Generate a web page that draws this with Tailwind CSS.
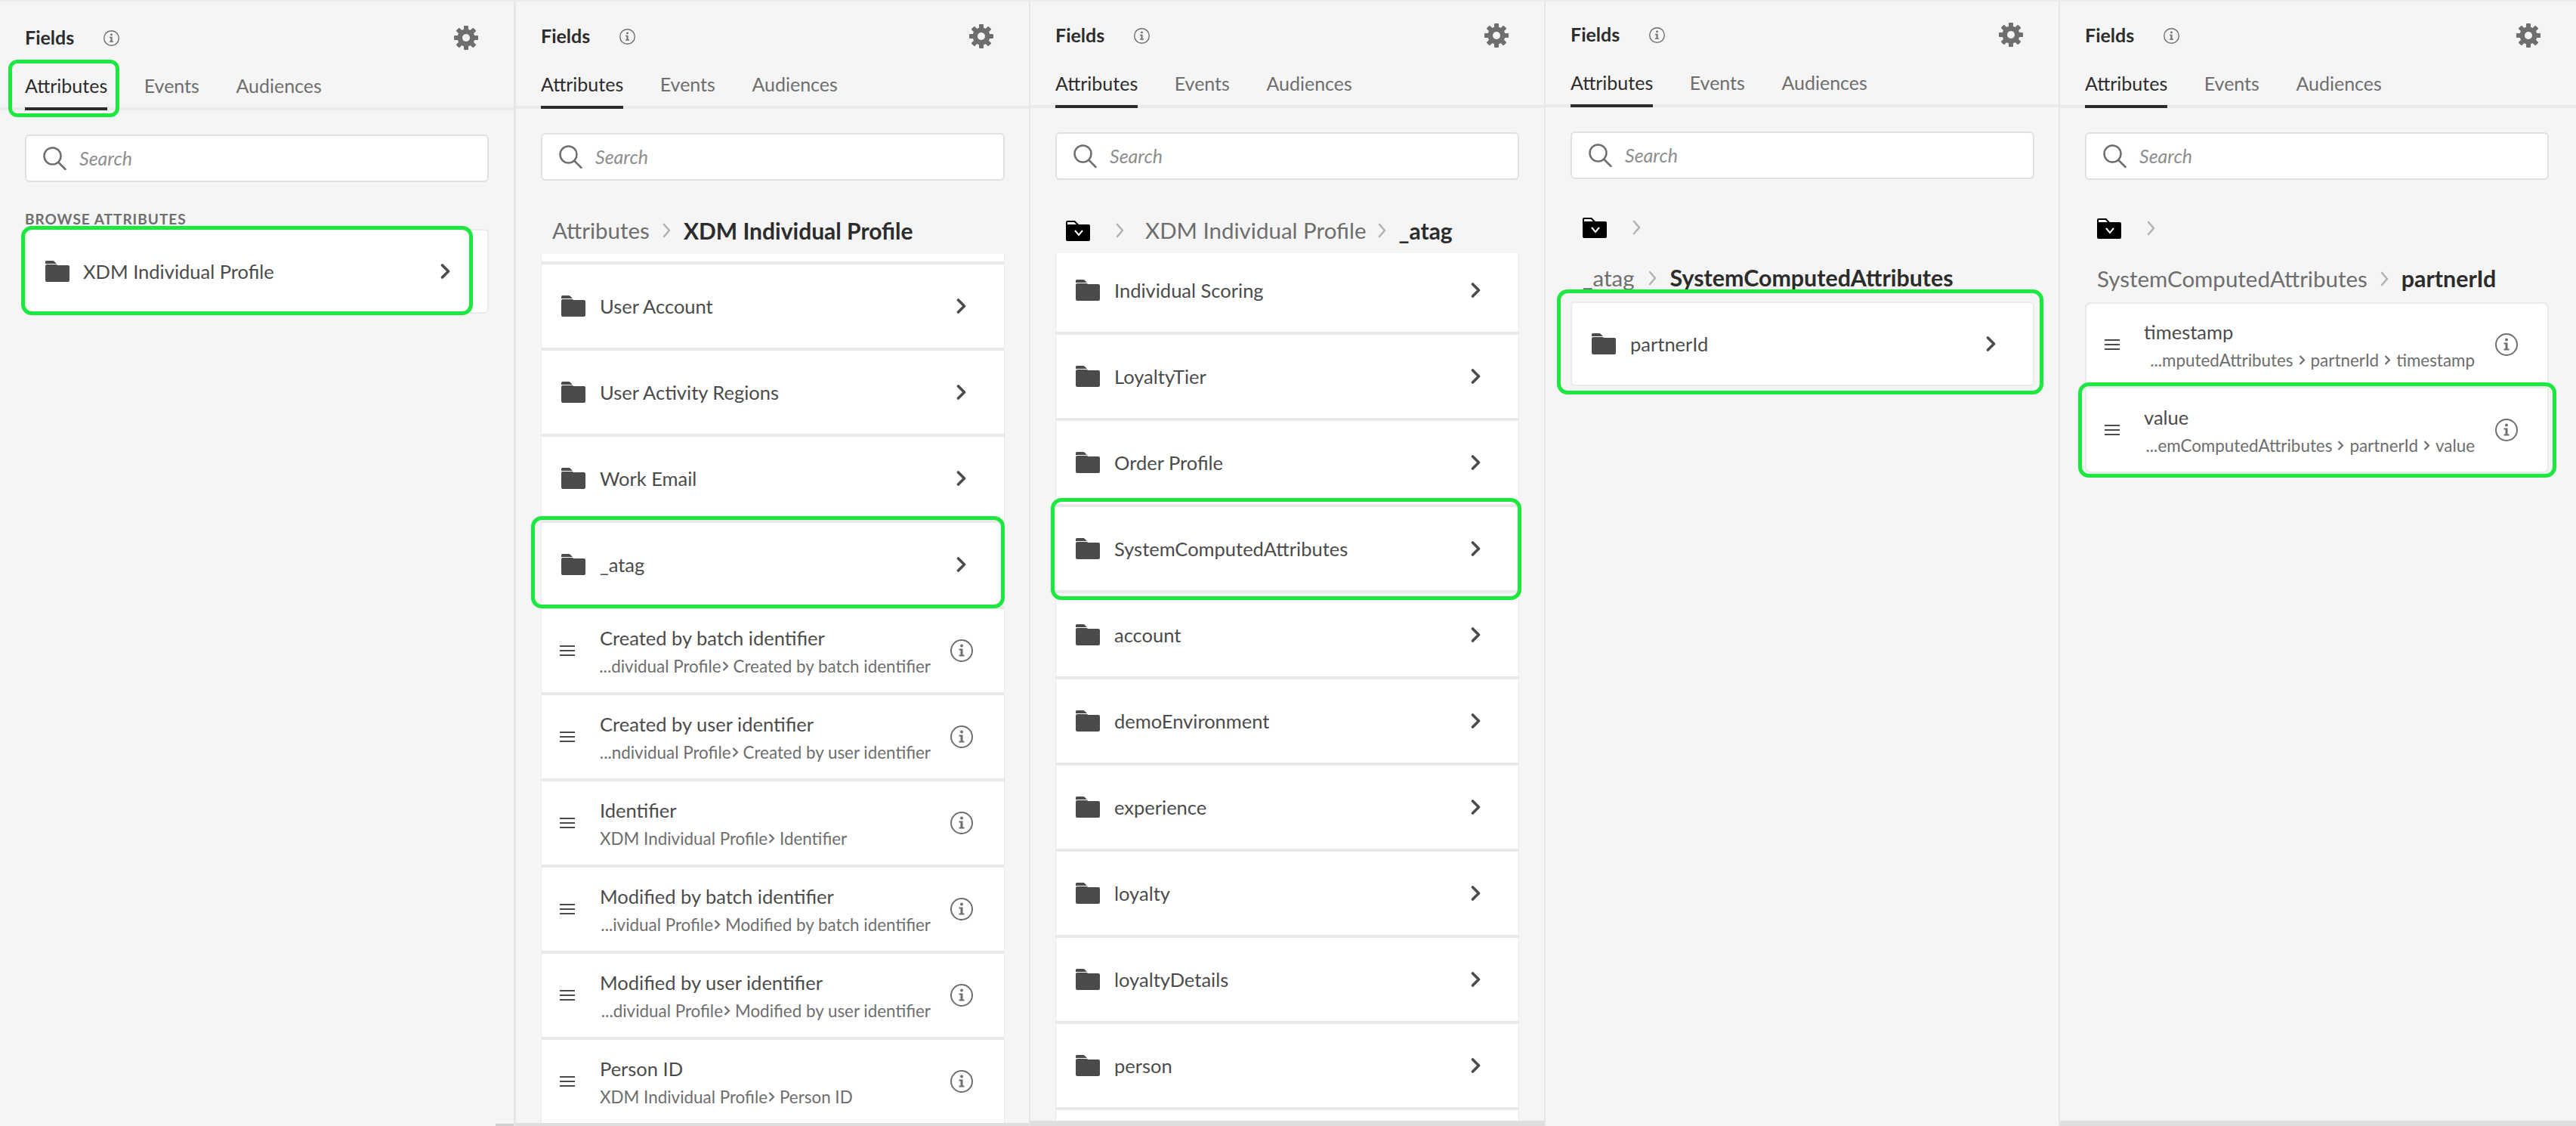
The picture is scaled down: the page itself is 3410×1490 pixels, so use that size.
<!DOCTYPE html>
<html lang="en">
<head>
    <meta charset="UTF-8">
    <title>Fields</title>
    <script src="https://cdn.jsdelivr.net/npm/@tailwindcss/browser@4"></script>
</head>
<body class="h-[1490px] w-[3410px] overflow-hidden bg-[#f5f5f5] font-['Lato',sans-serif]">
    <!-- shared icons -->
    <svg class="hidden">
        <symbol id="folder" viewBox="0 0 32 28"><path fill="#4b4b4b" d="M0 4V1.5Q0 0 1.5 0H10Q11 0 12 1L15 4ZM0 7Q0 5 2 5H15L16 6H30Q32 6 32 8V26Q32 28 30 28H2Q0 28 0 26Z"/></symbol>
        <symbol id="folder-open" viewBox="0 0 32 27"><path fill="#000" d="M0 25V2Q0 0 2 0H12L17 5H30Q32 5 32 7V25Q32 27 30 27H2Q0 27 0 25Z"/><path fill="#fff" d="M2 2H11L14 5H2Z"/><path fill="none" stroke="#fff" stroke-width="2" d="M12 13L17 19L22 13"/></symbol>
        <symbol id="chev" viewBox="0 0 13 20"><path fill="none" stroke="#4b4b4b" stroke-width="3.6" stroke-linecap="round" stroke-linejoin="round" d="M2.5 2L10.5 10L2.5 18"/></symbol>
        <symbol id="crumb" viewBox="0 0 11 20"><path fill="none" stroke="#b3b3b3" stroke-width="2.6" stroke-linecap="round" stroke-linejoin="round" d="M2 2L9 10L2 18"/></symbol>
        <symbol id="mini" viewBox="0 0 9 13"><path fill="none" stroke="#6e6e6e" stroke-width="2.2" d="M1.5 1L7 6.5L1.5 12"/></symbol>
        <symbol id="menu" viewBox="0 0 20 14"><path fill="#4b4b4b" d="M0 0H20V2H0ZM0 6H20V8H0ZM0 12H20V14H0Z"/></symbol>
        <symbol id="info" viewBox="0 0 30 30"><circle cx="15" cy="15" r="14" fill="none" stroke="#6e6e6e" stroke-width="2"/><circle cx="15" cy="8.5" r="2" fill="#6e6e6e"/><path fill="#6e6e6e" d="M11.5 12.5H16.5V20.5H18.5V22.5H11.5V20.5H13.5V14.5H11.5Z"/></symbol>
        <symbol id="gear" viewBox="0 0 32 32"><g fill="#6e6e6e"><circle cx="16" cy="16" r="11.5"/><rect x="13" y="0" width="6" height="32" rx="1"/><rect x="13" y="0" width="6" height="32" rx="1" transform="rotate(45 16 16)"/><rect x="13" y="0" width="6" height="32" rx="1" transform="rotate(90 16 16)"/><rect x="13" y="0" width="6" height="32" rx="1" transform="rotate(135 16 16)"/></g><circle cx="16" cy="16" r="5" fill="#f5f5f5"/></symbol>
        <symbol id="search" viewBox="0 0 31 31"><circle cx="12.5" cy="12.5" r="11" fill="none" stroke="#6e6e6e" stroke-width="2.5"/><path stroke="#6e6e6e" stroke-width="2.5" stroke-linecap="round" d="M20.5 21L29.5 30"/></symbol>
    </svg>

    <div class="flex h-full w-full border-t-2 border-[#ebebeb]">

        <!-- panel 1 -->
        <section class="flex h-full w-[683px] flex-col border-r-[3px] border-[#e6e6e6] pt-[24px]">
            <div class="flex h-[48px] items-center justify-between pl-[33px] pr-[47px]">
                <div class="flex items-center"><h2 class="w-[104px] text-[25px] font-bold text-[#2c2c2c]">Fields</h2><svg class="h-[21px] w-[21px]"><use href="#info"/></svg></div>
                <svg class="h-[32px] w-[32px]"><use href="#gear"/></svg>
            </div>
            <div class="flex h-[72px] items-end gap-[48.5px] border-b-4 border-[#eaeaea] pl-[33px] text-[25px] leading-[30px] text-[#6e6e6e]">
                <div class="relative -mb-[4px] border-b-4 border-[#2c2c2c] pb-[14px] text-[#2c2c2c]">Attributes<div class="pointer-events-none absolute -top-[19px] -left-[22px] -right-[16px] -bottom-[13px] z-10 rounded-[12px] border-[5px] border-[#1ce83f]"></div></div>
                <div class="-mb-[4px] border-b-4 border-transparent pb-[14px]">Events</div>
                <div class="-mb-[4px] border-b-4 border-transparent pb-[14px]">Audiences</div>
            </div>
            <div class="min-h-0 flex-1 overflow-hidden pl-[33px]">
                <div class="mt-[32px] flex h-[63px] w-[614px] items-center rounded-md border-2 border-[#e1e1e1] bg-white pl-[22px]"><svg class="h-[31px] w-[31px]"><use href="#search"/></svg><span class="ml-[17px] text-[25px] italic text-[#8e8e8e]">Search</span></div>
                <div class="mt-[36px] h-[26px] text-[19px] font-bold leading-[26px] tracking-[1px] text-[#6e6e6e]">BROWSE ATTRIBUTES</div>
                <div class="w-[614px] rounded-md border-2 border-[#ebebeb] bg-white">
                    <div class="relative flex h-[108px] items-center pl-[25px] pr-[49px]"><svg class="h-[28px] w-[32px]"><use href="#folder"/></svg><span class="ml-[18px] flex-1 text-[25.5px] text-[#4b4b4b]">XDM Individual Profile</span><svg class="h-[20px] w-[13px]"><use href="#chev"/></svg><div class="pointer-events-none absolute -top-[6px] -left-[7px] right-[19px] -bottom-[4px] z-10 rounded-[14px] border-[5px] border-[#1ce83f]"></div></div>
                </div>
            </div>
            <div class="ml-auto h-[3px] w-[24px] bg-[#cfcfcf]"></div>
        </section>

        <!-- panel 2 -->
        <section class="flex h-full w-[681px] flex-col border-r-2 border-[#e6e6e6] pt-[22px]">
            <div class="flex h-[48px] items-center justify-between pl-[33px] pr-[47px]">
                <div class="flex items-center"><h2 class="w-[104px] text-[25px] font-bold text-[#2c2c2c]">Fields</h2><svg class="h-[21px] w-[21px]"><use href="#info"/></svg></div>
                <svg class="h-[32px] w-[32px]"><use href="#gear"/></svg>
            </div>
            <div class="flex h-[72px] items-end gap-[48.5px] border-b-4 border-[#eaeaea] pl-[33px] text-[25px] leading-[30px] text-[#6e6e6e]">
                <div class="-mb-[4px] border-b-4 border-[#2c2c2c] pb-[14px] text-[#2c2c2c]">Attributes</div>
                <div class="-mb-[4px] border-b-4 border-transparent pb-[14px]">Events</div>
                <div class="-mb-[4px] border-b-4 border-transparent pb-[14px]">Audiences</div>
            </div>
            <div class="min-h-0 flex-1 overflow-hidden pl-[33px]">
                <div class="mt-[32px] flex h-[63px] w-[614px] items-center rounded-md border-2 border-[#e1e1e1] bg-white pl-[22px]"><svg class="h-[31px] w-[31px]"><use href="#search"/></svg><span class="ml-[17px] text-[25px] italic text-[#8e8e8e]">Search</span></div>
                <div class="mt-[46px] flex h-[40px] items-center pl-[15px] text-[29.5px] text-[#6e6e6e]"><span>Attributes</span><svg class="mx-[17px] h-[20px] w-[11px]"><use href="#crumb"/></svg><span class="text-[30px] font-bold text-[#2c2c2c]">XDM Individual Profile</span></div>
                <div class="mt-[11px] flex w-[614px] flex-col gap-[4px] border-x border-[#e9e9e9] bg-[#e9e9e9]">
                    <div class="h-[10px] bg-white"></div>
                    <div class="relative flex h-[110px] items-center bg-white pl-[26px] pr-[50px]"><svg class="h-[28px] w-[32px]"><use href="#folder"/></svg><span class="ml-[19px] flex-1 text-[25.5px] text-[#4b4b4b]">User Account</span><svg class="h-[20px] w-[13px]"><use href="#chev"/></svg></div>
                    <div class="relative flex h-[110px] items-center bg-white pl-[26px] pr-[50px]"><svg class="h-[28px] w-[32px]"><use href="#folder"/></svg><span class="ml-[19px] flex-1 text-[25.5px] text-[#4b4b4b]">User Activity Regions</span><svg class="h-[20px] w-[13px]"><use href="#chev"/></svg></div>
                    <div class="relative flex h-[110px] items-center bg-white pl-[26px] pr-[50px]"><svg class="h-[28px] w-[32px]"><use href="#folder"/></svg><span class="ml-[19px] flex-1 text-[25.5px] text-[#4b4b4b]">Work Email</span><svg class="h-[20px] w-[13px]"><use href="#chev"/></svg></div>
                    <div class="relative flex h-[110px] items-center bg-white pl-[26px] pr-[50px]"><svg class="h-[28px] w-[32px]"><use href="#folder"/></svg><span class="ml-[19px] flex-1 text-[25.5px] text-[#4b4b4b]">_atag</span><svg class="h-[20px] w-[13px]"><use href="#chev"/></svg><div class="pointer-events-none absolute -top-[9px] -left-[14px] -right-[1px] -bottom-[3px] z-10 rounded-[14px] border-[5px] border-[#1ce83f]"></div></div>
                    <div class="flex h-[110px] items-center bg-white pl-[24px] pr-[41px]"><svg class="h-[14px] w-[20px]"><use href="#menu"/></svg><div class="ml-[33px] flex-1"><div class="text-[25.5px] leading-[34px] text-[#4b4b4b]">Created by batch identifier</div><div class="mt-[7px] flex w-[438px] items-center justify-end whitespace-nowrap text-[22.4px] leading-[28px] text-[#6e6e6e]">...dividual Profile<svg class="ml-[1px] mr-[6px] h-[13px] w-[9px] shrink-0"><use href="#mini"/></svg>Created by batch identifier</div></div><svg class="h-[30px] w-[30px]"><use href="#info"/></svg></div>
                    <div class="flex h-[110px] items-center bg-white pl-[24px] pr-[41px]"><svg class="h-[14px] w-[20px]"><use href="#menu"/></svg><div class="ml-[33px] flex-1"><div class="text-[25.5px] leading-[34px] text-[#4b4b4b]">Created by user identifier</div><div class="mt-[7px] flex w-[438px] items-center justify-end whitespace-nowrap text-[22.4px] leading-[28px] text-[#6e6e6e]">...ndividual Profile<svg class="ml-[1px] mr-[6px] h-[13px] w-[9px] shrink-0"><use href="#mini"/></svg>Created by user identifier</div></div><svg class="h-[30px] w-[30px]"><use href="#info"/></svg></div>
                    <div class="flex h-[110px] items-center bg-white pl-[24px] pr-[41px]"><svg class="h-[14px] w-[20px]"><use href="#menu"/></svg><div class="ml-[33px] flex-1"><div class="text-[25.5px] leading-[34px] text-[#4b4b4b]">Identifier</div><div class="mt-[7px] flex w-[438px] items-center whitespace-nowrap text-[22.4px] leading-[28px] text-[#6e6e6e]">XDM Individual Profile<svg class="ml-[1px] mr-[6px] h-[13px] w-[9px] shrink-0"><use href="#mini"/></svg>Identifier</div></div><svg class="h-[30px] w-[30px]"><use href="#info"/></svg></div>
                    <div class="flex h-[110px] items-center bg-white pl-[24px] pr-[41px]"><svg class="h-[14px] w-[20px]"><use href="#menu"/></svg><div class="ml-[33px] flex-1"><div class="text-[25.5px] leading-[34px] text-[#4b4b4b]">Modified by batch identifier</div><div class="mt-[7px] flex w-[438px] items-center justify-end whitespace-nowrap text-[22.4px] leading-[28px] text-[#6e6e6e]">...ividual Profile<svg class="ml-[1px] mr-[6px] h-[13px] w-[9px] shrink-0"><use href="#mini"/></svg>Modified by batch identifier</div></div><svg class="h-[30px] w-[30px]"><use href="#info"/></svg></div>
                    <div class="flex h-[110px] items-center bg-white pl-[24px] pr-[41px]"><svg class="h-[14px] w-[20px]"><use href="#menu"/></svg><div class="ml-[33px] flex-1"><div class="text-[25.5px] leading-[34px] text-[#4b4b4b]">Modified by user identifier</div><div class="mt-[7px] flex w-[438px] items-center justify-end whitespace-nowrap text-[22.4px] leading-[28px] text-[#6e6e6e]">...dividual Profile<svg class="ml-[1px] mr-[6px] h-[13px] w-[9px] shrink-0"><use href="#mini"/></svg>Modified by user identifier</div></div><svg class="h-[30px] w-[30px]"><use href="#info"/></svg></div>
                    <div class="flex h-[110px] items-center bg-white pl-[24px] pr-[41px]"><svg class="h-[14px] w-[20px]"><use href="#menu"/></svg><div class="ml-[33px] flex-1"><div class="text-[25.5px] leading-[34px] text-[#4b4b4b]">Person ID</div><div class="mt-[7px] flex w-[438px] items-center whitespace-nowrap text-[22.4px] leading-[28px] text-[#6e6e6e]">XDM Individual Profile<svg class="ml-[1px] mr-[6px] h-[13px] w-[9px] shrink-0"><use href="#mini"/></svg>Person ID</div></div><svg class="h-[30px] w-[30px]"><use href="#info"/></svg></div>
                </div>
            </div>
            <div class="h-[4px] bg-[#dedede]"></div>
        </section>

        <!-- panel 3 -->
        <section class="flex h-full w-[682px] flex-col border-r-2 border-[#e6e6e6] pt-[21px]">
            <div class="flex h-[48px] items-center justify-between pl-[33px] pr-[47px]">
                <div class="flex items-center"><h2 class="w-[104px] text-[25px] font-bold text-[#2c2c2c]">Fields</h2><svg class="h-[21px] w-[21px]"><use href="#info"/></svg></div>
                <svg class="h-[32px] w-[32px]"><use href="#gear"/></svg>
            </div>
            <div class="flex h-[72px] items-end gap-[48.5px] border-b-4 border-[#eaeaea] pl-[33px] text-[25px] leading-[30px] text-[#6e6e6e]">
                <div class="-mb-[4px] border-b-4 border-[#2c2c2c] pb-[14px] text-[#2c2c2c]">Attributes</div>
                <div class="-mb-[4px] border-b-4 border-transparent pb-[14px]">Events</div>
                <div class="-mb-[4px] border-b-4 border-transparent pb-[14px]">Audiences</div>
            </div>
            <div class="min-h-0 flex-1 overflow-hidden pl-[33px]">
                <div class="mt-[32px] flex h-[63px] w-[614px] items-center rounded-md border-2 border-[#e1e1e1] bg-white pl-[22px]"><svg class="h-[31px] w-[31px]"><use href="#search"/></svg><span class="ml-[17px] text-[25px] italic text-[#8e8e8e]">Search</span></div>
                <div class="mt-[47px] flex h-[40px] items-center pl-[14px] text-[29.5px] text-[#6e6e6e]"><svg class="h-[27px] w-[32px]"><use href="#folder-open"/></svg><svg class="ml-[34px] mr-[28px] h-[20px] w-[11px]"><use href="#crumb"/></svg><span>XDM Individual Profile</span><svg class="mx-[16px] h-[20px] w-[11px]"><use href="#crumb"/></svg><span class="text-[30px] font-bold text-[#2c2c2c]">_atag</span></div>
                <div class="mt-[10px] flex w-[614px] flex-col gap-[4px] border-x border-[#e9e9e9] bg-[#e9e9e9]">
                    <div class="flex h-[104px] items-center bg-white pb-[6px] pl-[26px] pr-[50px]"><svg class="h-[28px] w-[32px]"><use href="#folder"/></svg><span class="ml-[19px] flex-1 text-[25.5px] text-[#4b4b4b]">Individual Scoring</span><svg class="h-[20px] w-[13px]"><use href="#chev"/></svg></div>
                    <div class="relative flex h-[110px] items-center bg-white pl-[26px] pr-[50px]"><svg class="h-[28px] w-[32px]"><use href="#folder"/></svg><span class="ml-[19px] flex-1 text-[25.5px] text-[#4b4b4b]">LoyaltyTier</span><svg class="h-[20px] w-[13px]"><use href="#chev"/></svg></div>
                    <div class="relative flex h-[110px] items-center bg-white pl-[26px] pr-[50px]"><svg class="h-[28px] w-[32px]"><use href="#folder"/></svg><span class="ml-[19px] flex-1 text-[25.5px] text-[#4b4b4b]">Order Profile</span><svg class="h-[20px] w-[13px]"><use href="#chev"/></svg></div>
                    <div class="relative flex h-[110px] items-center bg-white pl-[26px] pr-[50px]"><svg class="h-[28px] w-[32px]"><use href="#folder"/></svg><span class="ml-[19px] flex-1 text-[25.5px] text-[#4b4b4b]">SystemComputedAttributes</span><svg class="h-[20px] w-[13px]"><use href="#chev"/></svg><div class="pointer-events-none absolute -top-[12px] -left-[7px] -right-[4px] -bottom-[13px] z-10 rounded-[14px] border-[5px] border-[#1ce83f]"></div></div>
                    <div class="relative flex h-[110px] items-center bg-white pl-[26px] pr-[50px]"><svg class="h-[28px] w-[32px]"><use href="#folder"/></svg><span class="ml-[19px] flex-1 text-[25.5px] text-[#4b4b4b]">account</span><svg class="h-[20px] w-[13px]"><use href="#chev"/></svg></div>
                    <div class="relative flex h-[110px] items-center bg-white pl-[26px] pr-[50px]"><svg class="h-[28px] w-[32px]"><use href="#folder"/></svg><span class="ml-[19px] flex-1 text-[25.5px] text-[#4b4b4b]">demoEnvironment</span><svg class="h-[20px] w-[13px]"><use href="#chev"/></svg></div>
                    <div class="relative flex h-[110px] items-center bg-white pl-[26px] pr-[50px]"><svg class="h-[28px] w-[32px]"><use href="#folder"/></svg><span class="ml-[19px] flex-1 text-[25.5px] text-[#4b4b4b]">experience</span><svg class="h-[20px] w-[13px]"><use href="#chev"/></svg></div>
                    <div class="relative flex h-[110px] items-center bg-white pl-[26px] pr-[50px]"><svg class="h-[28px] w-[32px]"><use href="#folder"/></svg><span class="ml-[19px] flex-1 text-[25.5px] text-[#4b4b4b]">loyalty</span><svg class="h-[20px] w-[13px]"><use href="#chev"/></svg></div>
                    <div class="relative flex h-[110px] items-center bg-white pl-[26px] pr-[50px]"><svg class="h-[28px] w-[32px]"><use href="#folder"/></svg><span class="ml-[19px] flex-1 text-[25.5px] text-[#4b4b4b]">loyaltyDetails</span><svg class="h-[20px] w-[13px]"><use href="#chev"/></svg></div>
                    <div class="relative flex h-[110px] items-center bg-white pl-[26px] pr-[50px]"><svg class="h-[28px] w-[32px]"><use href="#folder"/></svg><span class="ml-[19px] flex-1 text-[25.5px] text-[#4b4b4b]">person</span><svg class="h-[20px] w-[13px]"><use href="#chev"/></svg></div>
                    <div class="h-[110px] bg-white"></div>
                </div>
            </div>
            <div class="h-[7px] bg-[#dedede]"></div>
        </section>

        <!-- panel 4 -->
        <section class="flex h-full w-[681px] flex-col border-r-2 border-[#e6e6e6] pt-[20px]">
            <div class="flex h-[48px] items-center justify-between pl-[33px] pr-[47px]">
                <div class="flex items-center"><h2 class="w-[104px] text-[25px] font-bold text-[#2c2c2c]">Fields</h2><svg class="h-[21px] w-[21px]"><use href="#info"/></svg></div>
                <svg class="h-[32px] w-[32px]"><use href="#gear"/></svg>
            </div>
            <div class="flex h-[72px] items-end gap-[48.5px] border-b-4 border-[#eaeaea] pl-[33px] text-[25px] leading-[30px] text-[#6e6e6e]">
                <div class="-mb-[4px] border-b-4 border-[#2c2c2c] pb-[14px] text-[#2c2c2c]">Attributes</div>
                <div class="-mb-[4px] border-b-4 border-transparent pb-[14px]">Events</div>
                <div class="-mb-[4px] border-b-4 border-transparent pb-[14px]">Audiences</div>
            </div>
            <div class="min-h-0 flex-1 overflow-hidden pl-[33px]">
                <div class="mt-[32px] flex h-[63px] w-[614px] items-center rounded-md border-2 border-[#e1e1e1] bg-white pl-[22px]"><svg class="h-[31px] w-[31px]"><use href="#search"/></svg><span class="ml-[17px] text-[25px] italic text-[#8e8e8e]">Search</span></div>
                <div class="mt-[44px] flex h-[40px] items-center pl-[16px]"><svg class="h-[27px] w-[32px]"><use href="#folder-open"/></svg><svg class="ml-[34px] h-[20px] w-[11px]"><use href="#crumb"/></svg></div>
                <div class="mt-[27px] flex h-[40px] items-center pl-[16px] text-[29.5px] text-[#6e6e6e]"><span>_atag</span><svg class="mx-[18px] h-[20px] w-[11px]"><use href="#crumb"/></svg><span class="text-[30.4px] font-bold text-[#2c2c2c]">SystemComputedAttributes</span></div>
                <div class="mt-[11px] w-[614px] rounded-md border-2 border-[#ebebeb] bg-white">
                    <div class="relative flex h-[108px] items-center pl-[26px] pr-[49px]"><svg class="h-[28px] w-[32px]"><use href="#folder"/></svg><span class="ml-[19px] flex-1 text-[25.5px] text-[#4b4b4b]">partnerId</span><svg class="h-[20px] w-[13px]"><use href="#chev"/></svg><div class="pointer-events-none absolute -top-[18px] -left-[20px] -right-[14px] -bottom-[13px] z-10 rounded-[14px] border-[5px] border-[#1ce83f]"></div></div>
                </div>
            </div>
        </section>

        <!-- panel 5 -->
        <section class="flex h-full flex-1 flex-col pt-[21px]">
            <div class="flex h-[48px] items-center justify-between pl-[33px] pr-[47px]">
                <div class="flex items-center"><h2 class="w-[104px] text-[25px] font-bold text-[#2c2c2c]">Fields</h2><svg class="h-[21px] w-[21px]"><use href="#info"/></svg></div>
                <svg class="h-[32px] w-[32px]"><use href="#gear"/></svg>
            </div>
            <div class="flex h-[72px] items-end gap-[48.5px] border-b-4 border-[#eaeaea] pl-[33px] text-[25px] leading-[30px] text-[#6e6e6e]">
                <div class="-mb-[4px] border-b-4 border-[#2c2c2c] pb-[14px] text-[#2c2c2c]">Attributes</div>
                <div class="-mb-[4px] border-b-4 border-transparent pb-[14px]">Events</div>
                <div class="-mb-[4px] border-b-4 border-transparent pb-[14px]">Audiences</div>
            </div>
            <div class="min-h-0 flex-1 overflow-hidden pl-[33px]">
                <div class="mt-[32px] flex h-[63px] w-[614px] items-center rounded-md border-2 border-[#e1e1e1] bg-white pl-[22px]"><svg class="h-[31px] w-[31px]"><use href="#search"/></svg><span class="ml-[17px] text-[25px] italic text-[#8e8e8e]">Search</span></div>
                <div class="mt-[44px] flex h-[40px] items-center pl-[16px]"><svg class="h-[27px] w-[32px]"><use href="#folder-open"/></svg><svg class="ml-[34px] h-[20px] w-[11px]"><use href="#crumb"/></svg></div>
                <div class="mt-[27px] flex h-[40px] items-center pl-[16px] text-[29.5px] text-[#6e6e6e]"><span>SystemComputedAttributes</span><svg class="mx-[17px] h-[20px] w-[11px]"><use href="#crumb"/></svg><span class="text-[30.4px] font-bold text-[#2c2c2c]">partnerId</span></div>
                <div class="mt-[11px] flex w-[614px] flex-col gap-[4px] rounded-md border-2 border-[#ebebeb] bg-[#ebebeb]">
                    <div class="flex h-[108px] items-center rounded-t-md bg-white pl-[24px] pr-[39px]"><svg class="h-[14px] w-[20px]"><use href="#menu"/></svg><div class="ml-[32px] flex-1"><div class="text-[25.5px] leading-[34px] text-[#4b4b4b]">timestamp</div><div class="mt-[7px] flex w-[438px] items-center justify-end whitespace-nowrap text-[22.4px] leading-[28px] text-[#6e6e6e]">...mputedAttributes<svg class="mx-[7px] h-[13px] w-[9px] shrink-0"><use href="#mini"/></svg>partnerId<svg class="mx-[7px] h-[13px] w-[9px] shrink-0"><use href="#mini"/></svg>timestamp</div></div><svg class="h-[30px] w-[30px]"><use href="#info"/></svg></div>
                    <div class="relative flex h-[110px] items-center rounded-b-md bg-white pl-[24px] pr-[39px]"><svg class="h-[14px] w-[20px]"><use href="#menu"/></svg><div class="ml-[32px] flex-1"><div class="text-[25.5px] leading-[34px] text-[#4b4b4b]">value</div><div class="mt-[7px] flex w-[438px] items-center justify-end whitespace-nowrap text-[22.4px] leading-[28px] text-[#6e6e6e]">...emComputedAttributes<svg class="mx-[7px] h-[13px] w-[9px] shrink-0"><use href="#mini"/></svg>partnerId<svg class="mx-[7px] h-[13px] w-[9px] shrink-0"><use href="#mini"/></svg>value</div></div><svg class="h-[30px] w-[30px]"><use href="#info"/></svg><div class="pointer-events-none absolute -top-[8px] -left-[11px] -right-[12px] -bottom-[8px] z-10 rounded-[14px] border-[5px] border-[#1ce83f]"></div></div>
                </div>
            </div>
            <div class="h-[7px] bg-[#dedede]"></div>
        </section>
    </div>
</body>
</html>
